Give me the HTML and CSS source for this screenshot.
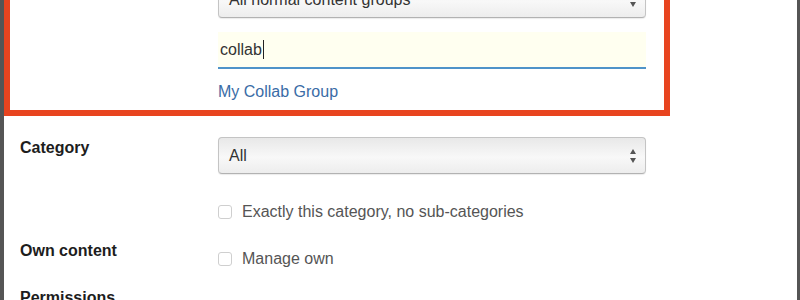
FILE: index.html
```html
<!DOCTYPE html>
<html lang="en">
<head>
  <meta charset="UTF-8">
  <meta name="viewport" content="width=device-width, initial-scale=1.0">
  <title>Role assignment</title>
  <link rel="stylesheet" href="styles.css">
</head>
<body>
  <div class="dialog">
    <!-- Highlighted group section -->
    <div class="highlight">
      <div class="row">
        <div class="label">Type of groups</div>
        <div class="select">
          <span>All normal content groups</span>
          <svg class="arrows" width="8" height="16" viewBox="0 0 8 16">
            <path d="M1 6 L4 1 L7 6 Z" fill="#555"/>
            <path d="M1 10 L4 15 L7 10 Z" fill="#555"/>
          </svg>
        </div>
      </div>

      <div class="row row-input">
        <div class="label"></div>
        <div class="search">collab<span class="caret"></span></div>
      </div>

      <div class="row row-link">
        <div class="label"></div>
        <a class="result" href="#">My Collab Group</a>
      </div>
    </div>

    <!-- Rest of the form -->
    <div class="form">
      <div class="row row-category">
        <div class="label">Category</div>
        <div class="select">
          <span>All</span>
          <svg class="arrows" width="8" height="16" viewBox="0 0 8 16">
            <path d="M1 6 L4 1 L7 6 Z" fill="#555"/>
            <path d="M1 10 L4 15 L7 10 Z" fill="#555"/>
          </svg>
        </div>
      </div>

      <div class="row row-check">
        <div class="label"></div>
        <label class="check"><span class="box"></span>Exactly this category, no sub-categories</label>
      </div>

      <div class="row row-own">
        <div class="label">Own content</div>
        <label class="check"><span class="box"></span>Manage own</label>
      </div>

      <div class="row row-perm">
        <div class="label">Permissions</div>
      </div>
    </div>
  </div>
</body>
</html>
```

FILE: styles.css
```css
/* General page */
body {
  margin: 0;
  font-family: "Liberation Sans", Arial, sans-serif;
  font-size: 16px;
  color: #1d1d1d;
  background: #fff;
  height: 300px;
  overflow: hidden;
}

.dialog {
  display: flow-root;
  height: 300px;
  border-left: 4px solid #555;
  border-right: 3px solid #555;
  background: #fff;
}

/* Two column rows: label + control */
.row {
  display: grid;
  grid-template-columns: 198px 428px;
  align-items: start;
}

.label {
  font-weight: bold;
  line-height: 22px;
}

/* Red highlight box */
.highlight {
  width: 626px;
  margin-top: -37px;
  padding: 12px 18px 7px 10px;
  border: 6px solid #e8441f;
}

.row-input {
  margin-top: 14px;
}

.row-link {
  margin-top: 12px;
}

/* Fake select boxes */
.select {
  position: relative;
  height: 35px;
  border: 1px solid #c4c4c4;
  border-bottom-color: #b2b2b2;
  border-radius: 4px;
  background: linear-gradient(#e8e8e8, #f8f8f8 55%, #ededed);
  box-shadow: 0 1px 1px rgba(0, 0, 0, 0.08);
  display: flex;
  align-items: center;
  padding: 0 10px;
  color: #333;
}

.select span {
  flex: 1;
}

.arrows {
  margin-right: -2px;
}

/* Search input */
.search {
  height: 35px;
  line-height: 35px;
  background: #fffff0;
  border-bottom: 2px solid #4f93c9;
  padding-left: 2px;
  color: #333;
}

.caret {
  display: inline-block;
  width: 1px;
  height: 19px;
  margin-left: 1px;
  vertical-align: -4px;
  background: #222;
}

.result {
  line-height: 22px;
  color: #3a6ca6;
  text-decoration: none;
}

/* Lower form */
.form {
  padding-left: 16px;
}

.row-category {
  margin-top: 21px;
}

.row-check {
  margin-top: 19px;
}

.row-own {
  margin-top: 17px;
}

.row-perm {
  margin-top: 17px;
}

.check {
  display: flex;
  align-items: center;
  padding-top: 8px;
  line-height: 22px;
  color: #555;
}

.box {
  width: 12px;
  height: 12px;
  border: 1px solid #cfcfcf;
  border-radius: 3px;
  background: #fff;
  margin-right: 10px;
}
```
